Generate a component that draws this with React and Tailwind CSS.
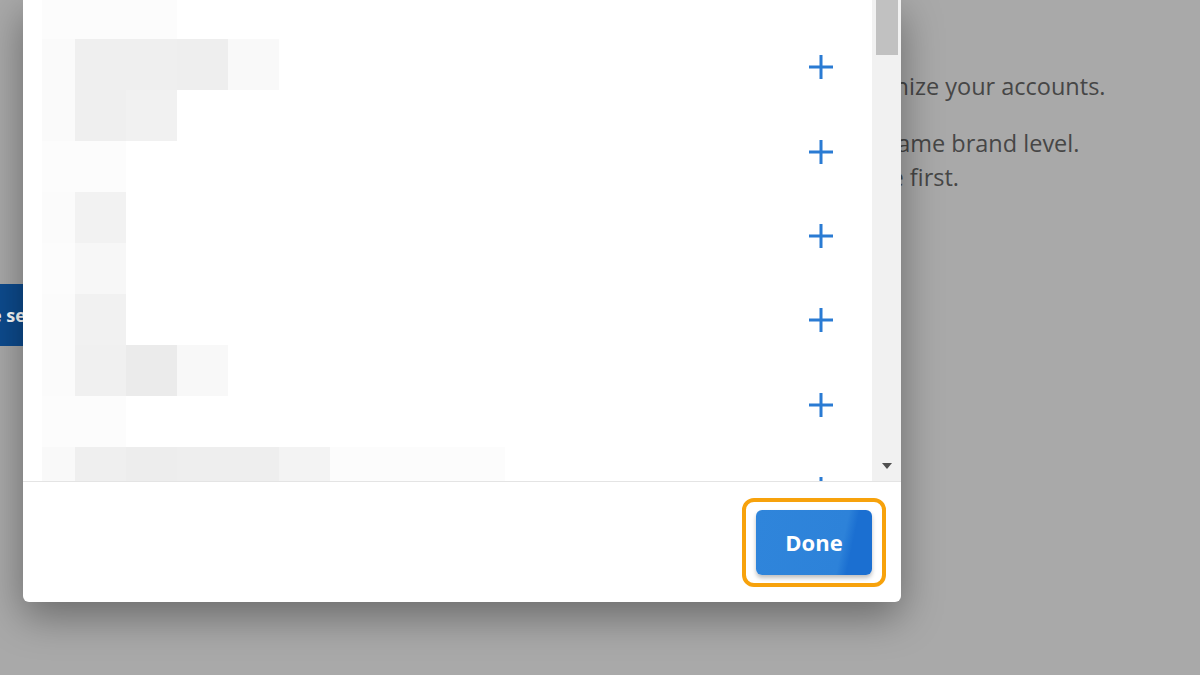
import React from 'react';

// mosaic blur cells over the hidden list labels, one array per 51px row
const mosaic = [
  ['bg-[#fcfcfc]', 'bg-[#fcfcfc]', 'bg-[#fcfcfc]'],
  ['bg-[#fafafa]', 'bg-[#efefef]', 'bg-[#efefef]', 'bg-[#eeeeee]', 'bg-[#f9f9f9]'],
  ['bg-[#fafafa]', 'bg-[#efefef]', 'bg-[#f1f1f1]'],
  ['bg-[#fcfcfc]', 'bg-[#fcfcfc]'],
  ['bg-[#fbfbfb]', 'bg-[#f2f2f2]'],
  ['bg-[#fcfcfc]', 'bg-[#f7f7f7]'],
  ['bg-[#fbfbfb]', 'bg-[#f1f1f1]'],
  ['bg-[#fbfbfb]', 'bg-[#f0f0f0]', 'bg-[#ebebeb]', 'bg-[#f8f8f8]'],
  ['bg-[#fcfcfc]', 'bg-[#fcfcfc]'],
  ['bg-[#f9f9f9]', 'bg-[#efefef]', 'bg-[#ededed]', 'bg-[#eeeeee]', 'bg-[#eeeeee]', 'bg-[#f3f3f3]', 'bg-[#fcfcfc]', 'bg-[#fcfcfc]', 'bg-[#fcfcfc]', 'bg-[#fcfcfc]'],
];

const PlusIcon = () => (
  <svg width="26" height="26" viewBox="0 0 26 26" fill="none">
    <path d="M13 1v24M1 13h24" stroke="#2a7bd3" strokeWidth="3" />
  </svg>
);

export default function App() {
  const rows = [0, 1, 2, 3, 4, 5];

  return (
    <div className="relative w-[1200px] h-[675px] overflow-hidden bg-[#a9a9a9] font-['Open_Sans',sans-serif]">
      {/* page behind the dialog */}
      <div className="flex flex-col pt-[69px] text-[23.5px] leading-[34px] text-[#464646]">
        <p className="ml-[845px] whitespace-nowrap">organize your accounts.</p>
        <p className="ml-[886px] mt-[23px] whitespace-nowrap">same brand level.</p>
        <p className="ml-[862px] whitespace-nowrap">one first.</p>
      </div>
      <div className="mt-[90px] ml-[-54px] w-[120px] h-[62px] bg-[#0d4b8e] text-white font-bold text-[18px] flex items-center pl-[14px] whitespace-nowrap">
        Save settings
      </div>

      {/* dialog */}
      <div className="absolute left-[23px] top-0 w-[878px] h-[602px] bg-white rounded-b-[6px] shadow-[0_14px_40px_rgba(0,0,0,0.38)] flex flex-col">
        <div className="flex h-[481px]">
          <div className="relative flex-1 overflow-hidden">
            <div className="flex flex-col pt-[25px]">
              {rows.map(i => (
                <div key={i} className="h-[84.4px] flex items-center justify-end pr-[38px]">
                  <PlusIcon />
                </div>
              ))}
            </div>
            <div className="absolute left-[19px] top-0 grid grid-cols-[33px_repeat(8,51px)_22px] grid-rows-[39px_repeat(9,51px)]">
              {mosaic.map((r, ri) =>
                Array.from({ length: 10 }).map((_, ci) => (
                  <div key={ri + '-' + ci} className={r[ci] || ''} />
                ))
              )}
            </div>
          </div>
          <div className="w-[29px] bg-[#f1f1f1] flex flex-col items-center justify-between pb-[12px]">
            <div className="w-[22px] h-[55px] bg-[#c1c1c1]" />
            <div className="w-0 h-0 border-l-[5px] border-r-[5px] border-t-[6px] border-l-transparent border-r-transparent border-t-[#505050]" />
          </div>
        </div>
        <div className="flex-1 border-t border-[#e4e4e4] flex items-center justify-end pr-[15px] rounded-b-[6px]">
          <div className="border-4 border-[#f7a20c] rounded-[12px] px-[10px] py-[8px]">
            <button className="w-[116px] h-[65px] rounded-[6px] bg-[linear-gradient(102deg,#2f85db_0%,#2d82d9_72%,#1b6fd1_80%)] text-white font-bold text-[22px] shadow-[0_3px_4px_rgba(0,0,0,0.25)]">
              Done
            </button>
          </div>
        </div>
      </div>
    </div>
  );
}
